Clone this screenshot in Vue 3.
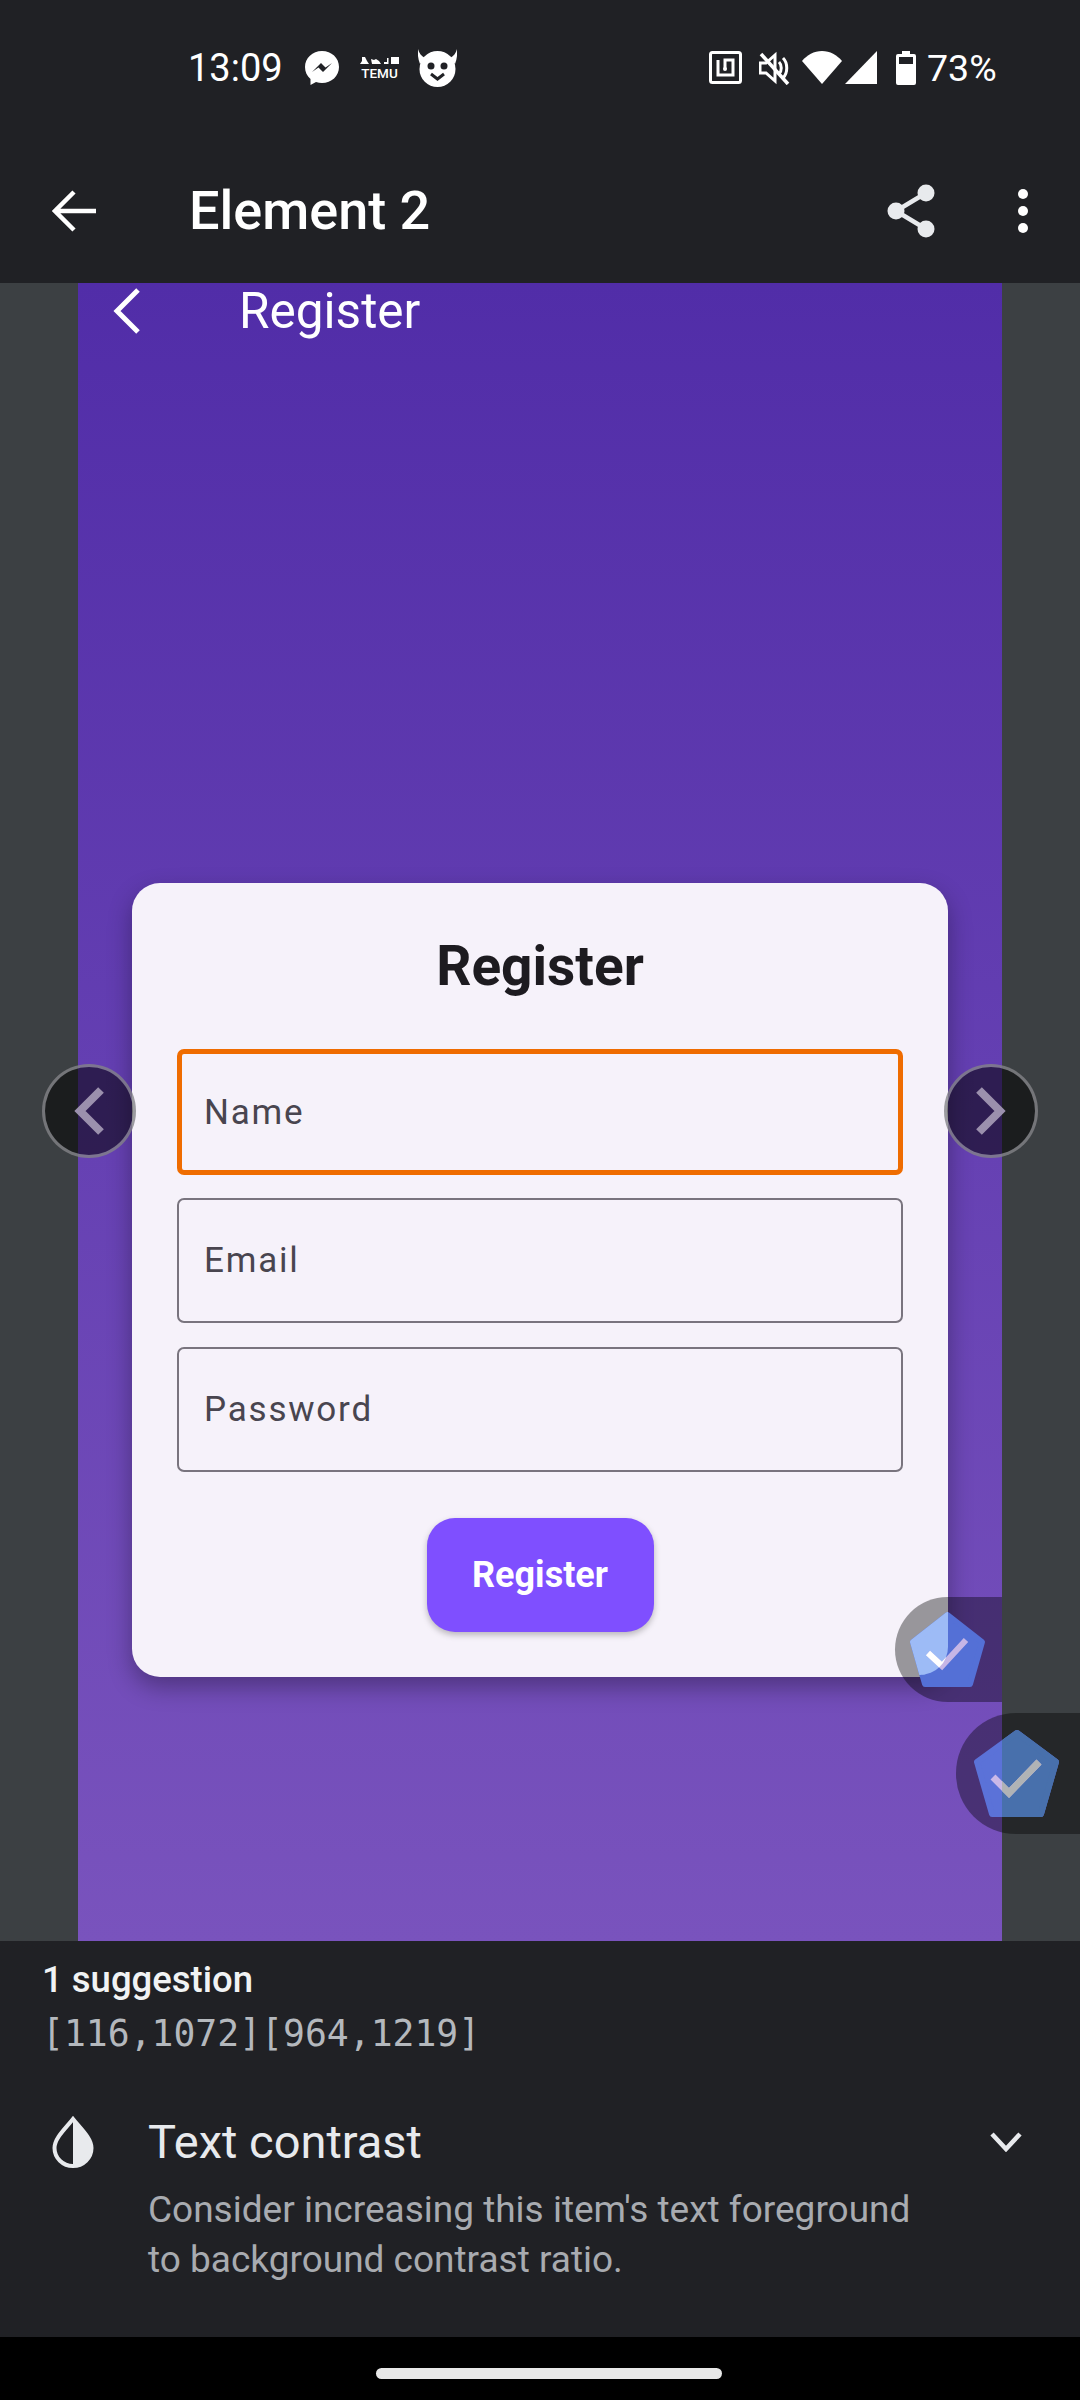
<template>
  <div class="app">
    <div class="status-bar">
      <span class="clock">13:09</span>
      <svg class="ic-messenger" width="34" height="34" viewBox="0 0 34 34">
        <path d="M17 0C7.500 0 0 7 0 16c0 5 2 9 5.500 12v6l5.500-3c2 .6 4 .9 6 .9 9.500 0 17-7 17-16S26.500 0 17 0z" fill="#fff" />
        <path d="M7 21l9-9 4.500 4.500L27 12l-9 9-4.500-4.500z" fill="#202125" />
      </svg>
      <div class="temu">
        <svg width="39" height="8" viewBox="0 0 39 8" fill="#fff">
          <path d="M2 0h3l2 4 2 3H0l2-3zM11 2l3 1 2-1 3 2 2 3h-9zM24 5h3V1h1.500v6H24zM31 0h8v7h-8z" />
        </svg>
        <span class="temu-word">TEMU</span>
      </div>
      <svg class="ic-devil" width="39" height="38" viewBox="0 0 39 38">
        <path d="M0 0c1 4 3 7 7 9l-5 6C0 10-.5 5 0 0zM39 0c-1 4-3 7-7 9l5 6c2-5 2.500-10 2-15z" fill="#fff" />
        <circle cx="19.500" cy="20" r="18" fill="#fff" />
        <circle cx="13" cy="17" r="3.500" fill="#202125" />
        <circle cx="26" cy="17" r="3.500" fill="#202125" />
        <path d="M13 25l6.500 5 6.500-5" fill="none" stroke="#202125" stroke-width="3" />
      </svg>
      <div class="status-right">
        <svg width="33" height="33" viewBox="0 0 33 33" fill="none" stroke="#fff">
          <rect x="1.500" y="1.500" width="30" height="30" rx="2" stroke-width="3" />
          <path d="M9 9v15h15V9h-8v9" stroke-width="3" />
          <circle cx="16" cy="18" r="2" fill="#fff" stroke="none" />
        </svg>
        <svg width="31" height="34" viewBox="0 0 31 34" fill="none" stroke="#fff" stroke-width="3">
          <path d="M1 12v10h6l9 8V4l-9 8z" />
          <path d="M20 11c3 3 3 9 0 12M24 7c5 5 5 15 0 20" />
          <path d="M2 3l27 30" stroke-width="3.500" />
        </svg>
        <svg class="ic-wifi" width="40" height="33" viewBox="0 0 40 33">
          <path d="M20 33L0 10C5 4 12 0 20 0s15 4 20 10z" fill="#fff" />
        </svg>
        <svg width="32" height="33" viewBox="0 0 32 33"><path d="M32 0v33H0z" fill="#fff" /></svg>
        <svg class="ic-battery" width="20" height="34" viewBox="0 0 20 34">
          <path d="M6 0h8v3h4a2 2 0 0 1 2 2v27a2 2 0 0 1-2 2H2a2 2 0 0 1-2-2V5a2 2 0 0 1 2-2h4z" fill="#fff" />
          <rect x="3" y="6" width="14" height="7" fill="#202125" />
        </svg>
        <span class="battery-text">73%</span>
      </div>
    </div>

    <div class="app-bar">
      <svg width="44" height="42" viewBox="0 0 44 42" fill="none" stroke="#fff" stroke-width="4.500">
        <path d="M44 21H4M22 2L3 21l19 19" />
      </svg>
      <span class="app-title">Element 2</span>
      <svg class="ic-share" width="48" height="54" viewBox="0 0 48 54" fill="#e8eaed">
        <circle cx="39" cy="9" r="8.500" />
        <circle cx="9" cy="27" r="8.500" />
        <circle cx="39" cy="45" r="8.500" />
        <path d="M39 9L9 27l30 18" fill="none" stroke="#e8eaed" stroke-width="4.500" />
      </svg>
      <svg class="ic-more" width="10" height="44" viewBox="0 0 10 44" fill="#fff">
        <circle cx="5" cy="5" r="5" />
        <circle cx="5" cy="22" r="5" />
        <circle cx="5" cy="39" r="5" />
      </svg>
    </div>

    <div class="preview">
      <div class="screen">
        <div class="screen-top">
          <svg width="28" height="46" viewBox="0 0 28 46" fill="none" stroke="#fff" stroke-width="5">
            <path d="M25 2L4 23l21 21" />
          </svg>
          <span class="screen-title">Register</span>
        </div>

        <div class="card">
          <h1 class="card-title">Register</h1>
          <div class="field field-focus"><span>Name</span></div>
          <div class="field"><span>Email</span></div>
          <div class="field"><span>Password</span></div>
          <div class="btn-row">
            <button class="btn">Register</button>
          </div>
        </div>

        <div class="chip chip-a">
          <svg width="85" height="85" viewBox="-5 -5 85 85">
            <defs>
              <clipPath id="lightPart"><path d="M-5-5H38V35A28 28 0 0 1 10 63H-5Z" /></clipPath>
            </defs>
            <path d="M37.500 3L72 30 60 72H15L3 30z" fill="#5470d6" stroke="#5470d6" stroke-width="6" stroke-linejoin="round" />
            <path d="M37.500 3L72 30 60 72H15L3 30z" fill="#9dbbf6" stroke="#9dbbf6" stroke-width="6" stroke-linejoin="round" clip-path="url(#lightPart)" />
            <path d="M18 41l14 13 24-26" fill="none" stroke="#c6b6e6" stroke-width="6" />
            <path d="M18 41l14 13 6-6.500" fill="none" stroke="#fff" stroke-width="6" clip-path="url(#lightPart)" />
          </svg>
        </div>
      </div>

      <div class="nav-btn nav-left">
        <svg width="30" height="48" viewBox="0 0 30 48" fill="none" stroke="#9b90ad" stroke-width="8">
          <path d="M27 3L6 24l21 21" />
        </svg>
      </div>
      <div class="nav-btn nav-right">
        <svg width="30" height="48" viewBox="0 0 30 48" fill="none" stroke="#9b90ad" stroke-width="8">
          <path d="M3 3l21 21L3 45" />
        </svg>
      </div>

      <div class="chip chip-b">
        <svg width="97" height="99" viewBox="-5 -5 97 99">
          <defs>
            <clipPath id="rightPart"><rect x="29" y="-5" width="70" height="99" /></clipPath>
          </defs>
          <path d="M44 4L83 33 68 85H19L4 33z" fill="#5b72d8" stroke="#5b72d8" stroke-width="6" stroke-linejoin="round" />
          <path d="M44 4L83 33 68 85H19L4 33z" fill="#4870ac" stroke="#4870ac" stroke-width="6" stroke-linejoin="round" clip-path="url(#rightPart)" />
          <path d="M20 48l16 16 30-31" fill="none" stroke="#c9b8e8" stroke-width="7" />
          <path d="M20 48l16 16 30-31" fill="none" stroke="#b0b3b5" stroke-width="7" clip-path="url(#rightPart)" />
        </svg>
      </div>
    </div>

    <div class="suggestions">
      <div class="sug-count">1 suggestion</div>
      <div class="sug-bounds">[116,1072][964,1219]</div>
      <div class="sug-item">
        <svg class="ic-drop" width="42" height="52" viewBox="0 0 42 52">
          <path d="M21 3C14 12 2.500 22 2.500 32a18.500 18 0 0 0 37 0C39.500 22 28 12 21 3z" fill="none" stroke="#e8eaed" stroke-width="4" />
          <path d="M21 3c7 9 18.500 19 18.500 29A18.500 18 0 0 1 21 50z" fill="#e8eaed" />
        </svg>
        <div class="sug-body">
          <div class="sug-title">Text contrast</div>
          <p class="sug-desc">Consider increasing this item's text foreground<br>to background contrast ratio.</p>
        </div>
        <svg class="ic-chevron" width="32" height="20" viewBox="0 0 32 20" fill="none" stroke="#e8eaed" stroke-width="4.500">
          <path d="M2 2l14 15L30 2" />
        </svg>
      </div>
    </div>

    <div class="home-bar">
      <div class="home-pill"></div>
    </div>
  </div>
</template>

<script setup>
</script>

<style>
html, body { background: #000; }
</style>

<style scoped>
.app {
  width: 1080px; height: 2400px; display: flex; flex-direction: column;
  background: #202125; font-family: Roboto, "Noto Sans", sans-serif; color: #fff; overflow: hidden;
}

.status-bar { height: 96px; flex: none; display: flex; align-items: center; padding: 39px 85px 0 188px; box-sizing: border-box; }
.clock { font-size: 38px; line-height: 58px; width: 92px; margin-right: 25px; }
.status-bar > svg, .temu { flex: none; }
.temu { display: flex; flex-direction: column; align-items: center; width: 39px; margin-left: 21px; gap: 2px; }
.temu svg { display: block; }
.temu-word { font-size: 13.500px; line-height: 12px; font-weight: 500; }
.ic-devil { margin-left: 19px; }
.status-right { margin-left: auto; display: flex; align-items: center; }
.status-right svg:nth-child(2) { margin-left: 17px; }
.status-right svg:nth-child(3) { margin-left: 12px; }
.status-right svg:nth-child(4) { margin-left: 3px; }
.ic-battery { margin-left: 19px; }
.battery-text { font-size: 37.500px; line-height: 58px; margin-left: 11px; width: 68px; }

.app-bar { height: 187px; flex: none; display: flex; align-items: center; padding: 42px 52px 0; box-sizing: border-box; }
.app-title { font-size: 54px; font-weight: 500; margin-left: 93px; line-height: 60px; }
.ic-share { margin-left: auto; }
.ic-more { margin-left: 83px; }

.preview { height: 1658px; flex: none; position: relative; background: #3c4043; overflow: hidden; }
.screen {
  width: 924px; height: 100%; margin: 0 auto; position: relative; overflow: hidden;
  background: linear-gradient(180deg, #512da8 0%, #7953bd 100%);
  display: flex; flex-direction: column;
}
.screen-top { height: 600px; flex: none; display: flex; align-items: flex-start; padding: 5px 0 0 35px; box-sizing: border-box; }
.screen-title { font-size: 49.500px; line-height: 46px; margin-left: 98px; }

.card {
  width: 816px; height: 794px; margin-left: 54px; box-sizing: border-box; padding: 0 45px;
  background: #f6f2fa; border-radius: 28px; box-shadow: 0 10px 24px rgba(0, 0, 0, .32); color: #1d1b20;
}
.card-title { margin: 0; height: 166px; display: flex; align-items: center; justify-content: center; font-size: 55px; font-weight: 700; line-height: 60px; }
.field {
  height: 125px; box-sizing: border-box; border: 2px solid #79747e; border-radius: 7px;
  display: flex; align-items: center; padding-left: 25px; margin-bottom: 24px;
  font-size: 35px; letter-spacing: 1.800px; color: #49454f;
}
.field-focus { height: 126px; border: 5px solid #ef6c00; padding-left: 22px; margin-bottom: 23px; }
.btn-row { display: flex; justify-content: center; margin-top: 46px; }
.btn {
  width: 227px; height: 114px; border: none; border-radius: 28px; background: #7f4fff; color: #fff;
  font-family: Roboto, sans-serif; font-size: 36px; font-weight: 700; box-shadow: 0 3px 6px rgba(0, 0, 0, .25);
}

.nav-btn {
  position: absolute; width: 94px; height: 94px; border-radius: 50%; box-sizing: border-box;
  background: rgba(0, 0, 0, .54); border: 3px solid rgba(190, 190, 195, .55);
  display: flex; align-items: center; justify-content: center;
}
.nav-left { left: 42px; top: 781px; }
.nav-right { left: 944px; top: 781px; }

.chip { position: absolute; background: rgba(0, 0, 0, .38); }
.chip svg { position: absolute; }
.chip-a { left: 817px; top: 1314px; width: 300px; height: 105px; border-radius: 53px; }
.chip-a svg { left: 10px; top: 10px; }
.chip-b { left: 956px; top: 1430px; width: 300px; height: 121px; border-radius: 60px; }
.chip-b svg { left: 12px; top: 11px; }

.suggestions { flex: 1; box-sizing: border-box; padding: 15px 0 0 42px; background: #202125; }
.sug-count { font-size: 36.500px; font-weight: 500; line-height: 48px; color: #f1f3f4; }
.sug-bounds { font-family: "DejaVu Sans Mono", monospace; font-size: 36.400px; line-height: 48px; margin-top: 6px; color: #b4b8bd; }
.sug-item { display: flex; align-items: flex-start; margin-top: 57px; position: relative; }
.ic-drop { flex: none; margin: 1px 0 0 10px; }
.sug-body { margin-left: 54px; }
.sug-title { font-size: 47px; line-height: 54px; color: #e8eaed; }
.sug-desc { margin: 16px 0 0; font-size: 37px; line-height: 50px; color: #a8abb0; }
.ic-chevron { position: absolute; left: 948px; top: 17px; }

.home-bar { height: 63px; flex: none; background: #000; display: flex; justify-content: center; padding-top: 31px; box-sizing: border-box; }
.home-pill { width: 346px; height: 11px; border-radius: 6px; background: #e8e8e8; margin-left: 18px; }
</style>
